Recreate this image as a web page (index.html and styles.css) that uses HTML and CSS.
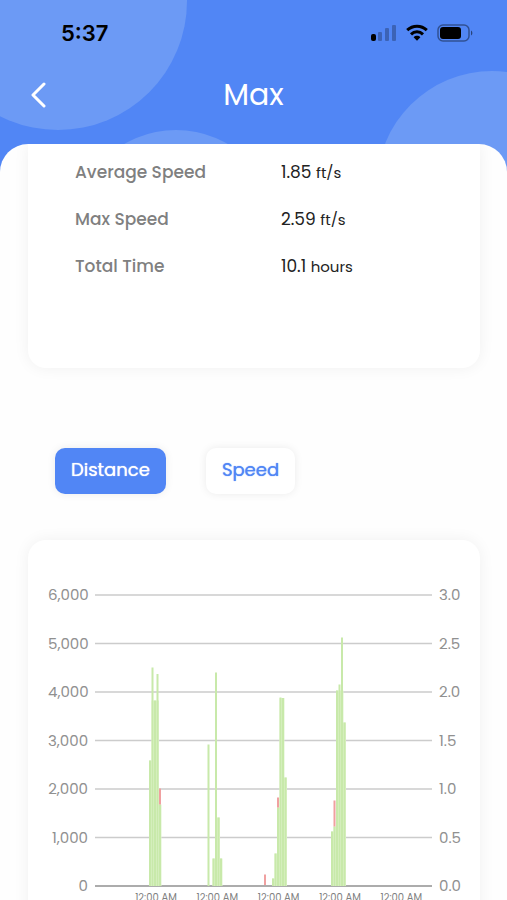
FILE: index.html
```html
<!DOCTYPE html>
<html lang="en">

<head>
  <meta charset="UTF-8">
  <meta name="viewport" content="width=device-width, initial-scale=1.0">
  <title>Max</title>
  <link rel="stylesheet" href="styles.css">
</head>

<body>
  <header class="header">
    <span class="circle circle-left"></span>
    <span class="circle circle-middle"></span>
    <span class="circle circle-right"></span>

    <div class="status-bar">
      <span class="time">5:37</span>
      <div class="status-icons">
        <svg width="26" height="18" viewBox="0 0 26 18">
          <rect x="0" y="10" width="5" height="7" rx="2" />
          <g opacity="0.25">
            <rect x="7" y="8" width="4" height="9" rx="1" />
            <rect x="14" y="4" width="4" height="13" rx="1" />
            <rect x="21" y="1" width="4" height="16" rx="1" />
          </g>
        </svg>
        <svg width="22" height="18" viewBox="0 0 22 18" fill="none" stroke="#000" stroke-width="3">
          <path d="M1.2 6.2C6.8 .9 15.2 .9 20.8 6.2" />
          <path d="M5 10.3C8.4 7 13.6 7 17 10.3" />
          <path d="M7.6 13.2C9.5 11.4 12.5 11.4 14.4 13.2L11 16.7Z" fill="#000" stroke="none" />
        </svg>
        <svg width="36" height="18" viewBox="0 0 36 18">
          <rect x="1" y="1" width="31" height="16" rx="5" fill="none" stroke="#000" stroke-opacity="0.4" stroke-width="1.5" />
          <rect x="3" y="3" width="21" height="12" rx="3" />
          <path d="M34 6.5C35.8 7.2 35.8 10.8 34 11.5Z" opacity="0.5" />
        </svg>
      </div>
    </div>

    <nav class="nav">
      <button class="back" type="button" aria-label="Back">
        <svg width="16" height="26" viewBox="0 0 16 26" fill="none" stroke="#fff" stroke-width="3" stroke-linecap="round" stroke-linejoin="round">
          <path d="M14 2L3 13L14 24" />
        </svg>
      </button>
      <h1>Max</h1>
    </nav>
  </header>

  <main class="panel">
    <section class="card summary">
      <dl>
        <dt>Average Speed</dt>
        <dd>1.85 <small>ft/s</small></dd>
        <dt>Max Speed</dt>
        <dd>2.59 <small>ft/s</small></dd>
        <dt>Total Time</dt>
        <dd>10.1 <small>hours</small></dd>
      </dl>
    </section>

    <div class="tabs">
      <button class="tab active" type="button">Distance</button>
      <button class="tab" type="button">Speed</button>
    </div>

    <section class="card chart">
      <div class="axis axis-left">
        <span>6,000</span>
        <span>5,000</span>
        <span>4,000</span>
        <span>3,000</span>
        <span>2,000</span>
        <span>1,000</span>
        <span>0</span>
      </div>

      <svg class="plot" viewBox="0 0 674 582" preserveAspectRatio="none">
        <g class="grid">
          <path d="M0 0H674M0 97H674M0 194H674M0 291H674M0 388H674M0 485H674" />
          <path class="base" d="M0 582H674" />
        </g>
        <!-- light strip behind each run of bars -->
        <g class="bars-back">
          <path d="M108 582V331H113V211H128V419H133V582Z" />
          <path d="M235 582V527H240V445H250V527H255V582Z" />
          <path d="M354 582V567H359V517H364V425H369V206H379V365H384V582Z" />
          <path d="M472 582V473H477V463H482V191H497V255H502V582Z" />
        </g>
        <g class="bars">
          <path d="M110 582V331M115 582V145M120 582V211M125 582V158M130 582V419" />
          <path d="M227 582V299M237 582V527M242 582V155M247 582V445M252 582V527" />
          <path d="M356 582V567M361 582V517M366 582V425M371 582V205M376 582V206M381 582V365" />
          <path d="M474 582V473M479 582V463M484 582V191M489 582V179M494 582V85M499 582V255" />
        </g>
        <path class="bars-red" d="M130 419V387M340 580V559M366 425V405M479 463V411" />
      </svg>

      <div class="axis">
        <span>3.0</span>
        <span>2.5</span>
        <span>2.0</span>
        <span>1.5</span>
        <span>1.0</span>
        <span>0.5</span>
        <span>0.0</span>
      </div>

      <div class="dates">
        <span>12:00 AM</span>
        <span>12:00 AM</span>
        <span>12:00 AM</span>
        <span>12:00 AM</span>
        <span>12:00 AM</span>
      </div>
    </section>
  </main>
</body>

</html>
```

FILE: styles.css
```css
* {
  box-sizing: border-box;
}

body {
  display: flex;
  flex-direction: column;
  height: 100vh;
  margin: 0;
  overflow: hidden;
  background-color: #5186f5;
  font-family: Poppins, Inter, sans-serif;
}

button {
  border: none;
  cursor: pointer;
  font-family: inherit;
}

/* header, runs on behind the rounded corners of the panel */
.header {
  position: relative;
  flex: none;
  height: 172px;
  overflow: hidden;
}

.circle {
  position: absolute;
  border-radius: 50%;
  background-color: #6c9af5;
}

.circle-left {
  top: -128px;
  left: -71px;
  width: 258px;
  height: 258px;
}

.circle-middle {
  top: 130px;
  left: 72px;
  width: 208px;
  height: 208px;
}

.circle-right {
  top: 71px;
  right: -100px;
  width: 230px;
  height: 230px;
}

.status-bar {
  position: relative;
  display: flex;
  justify-content: space-between;
  align-items: center;
  height: 66px;
  padding: 0 34px 0 61px;
}

.time {
  font-family: Inter, sans-serif;
  font-size: 22px;
  font-weight: 600;
}

.status-icons {
  display: flex;
  gap: 9px;
}

.nav {
  position: relative;
  display: grid;
  grid-template-columns: 48px 1fr 48px;
  align-items: center;
  height: 58px;
  padding: 0 16px;
}

.back {
  display: flex;
  padding: 8px 14px;
  background: none;
}

h1 {
  margin: 0;
  color: white;
  font-size: 30px;
  font-weight: 400;
  text-align: center;
}

/* content */
.panel {
  position: relative;
  flex: 1;
  min-height: 0;
  margin-top: -28px;
  padding: 0 27px 0 28px;
  overflow-y: auto;
  scrollbar-width: none;
  border-radius: 28px 28px 0 0;
  background-color: #fefefe;
}

.card {
  border-radius: 18px;
  background-color: white;
  box-shadow: 0 0 16px rgba(0, 0, 0, 0.06);
}

.summary {
  padding: 5px 24px 78px 47px;
  border-radius: 0 0 18px 18px;
}

dl {
  display: grid;
  grid-template-columns: 206px 1fr;
  margin: 0;
  font-size: 17px;
  line-height: 47px;
}

dt {
  color: #808080;
  font-weight: 500;
}

dd {
  margin: 0;
  color: #222;
}

small {
  font-size: 15px;
  line-height: 1;
}

.tabs {
  display: flex;
  gap: 40px;
  padding: 80px 27px 46px;
}

.tab {
  height: 46px;
  padding: 0 16px 4px;
  border-radius: 10px;
  background-color: white;
  box-shadow: 0 0 8px rgba(0, 0, 0, 0.08);
  color: #5186f5;
  font-size: 18px;
  text-shadow: 0 0 1px;
}

.tab.active {
  background-color: #5186f5;
  color: white;
}

/* chart */
.chart {
  display: grid;
  grid-template-columns: 40px 1fr 22px;
  column-gap: 7px;
  padding: 47px 19px 40px 20px;
}

.axis {
  display: flex;
  flex-direction: column;
  justify-content: space-between;
  height: 307px;
  color: #909090;
  font-size: 15px;
  line-height: 16px;
}

.axis-left {
  text-align: right;
}

.plot {
  width: 100%;
  height: 291px;
  margin-top: 8px;
  overflow: visible;
}

.grid {
  stroke: #ccc;
  stroke-width: 3;
}

.base {
  stroke: #909090;
}

.bars-back {
  fill: #e0f3cd;
}

.bars {
  stroke: #c8e9aa;
  stroke-width: 4;
}

.bars-red {
  stroke: #f0a0a0;
  stroke-width: 4;
}

.dates {
  display: grid;
  grid-column: 2;
  grid-template-columns: repeat(5, 1fr);
  padding-left: 9%;
  color: #808080;
  font-size: 10px;
  line-height: 8px;
  text-align: center;
}
```
